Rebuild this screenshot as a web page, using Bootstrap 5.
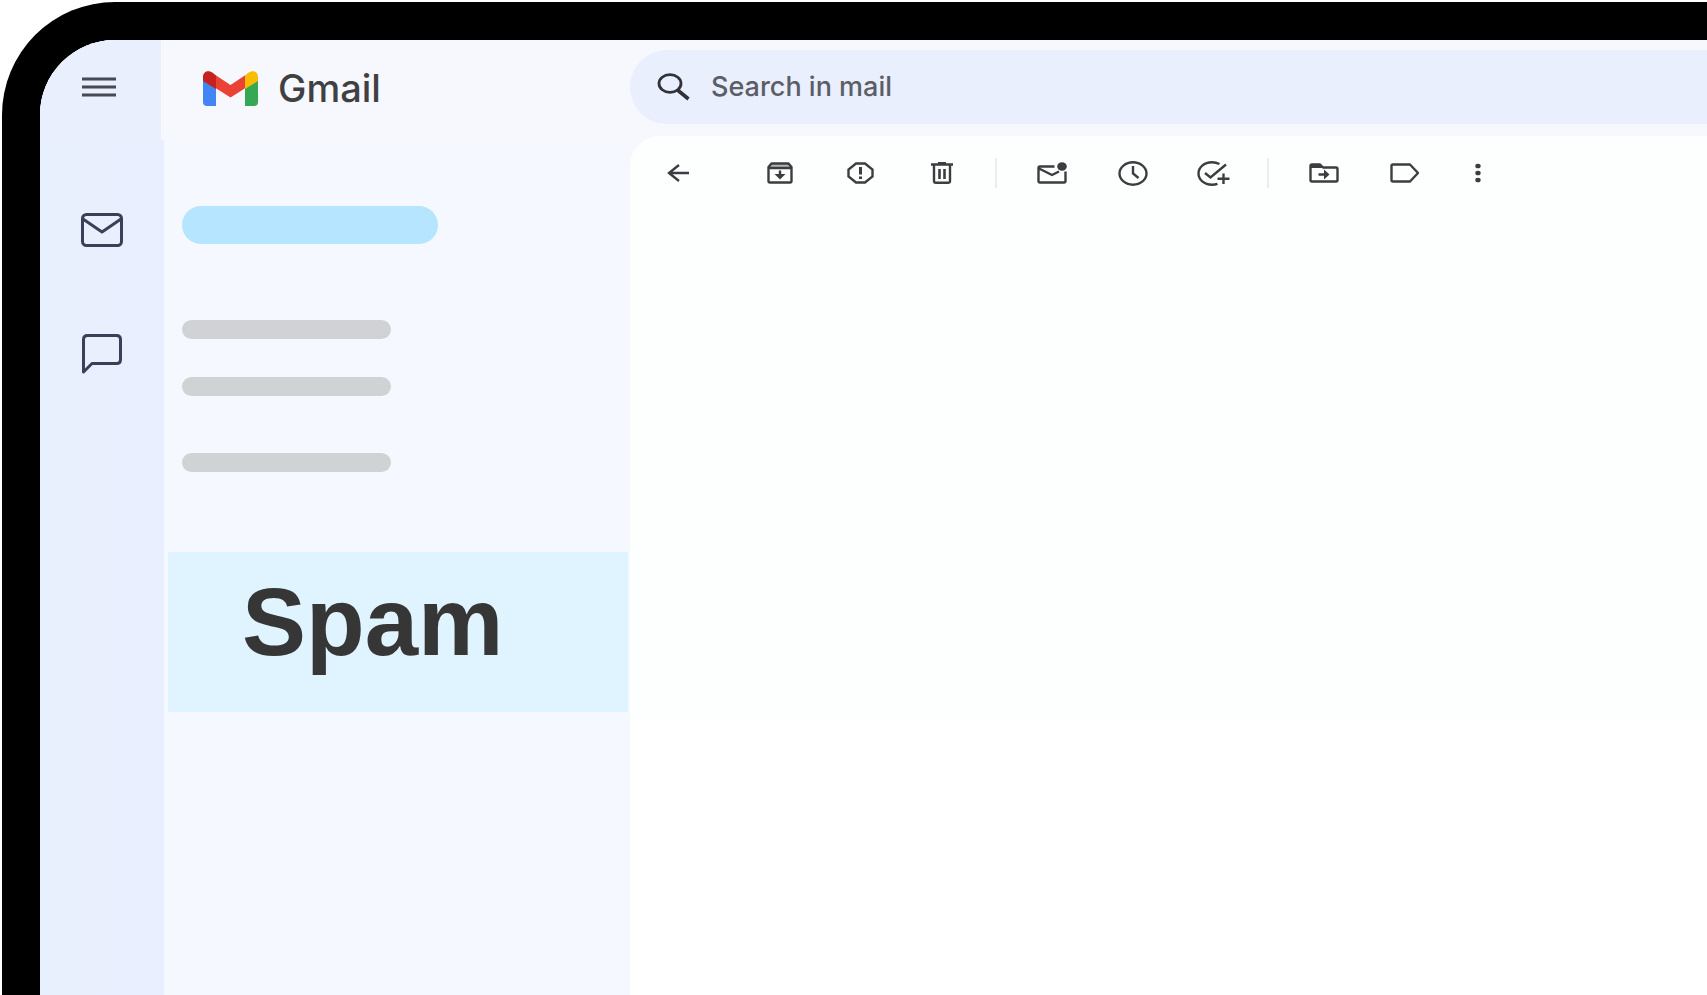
<!DOCTYPE html>
<html lang="en">
<head>
<meta charset="utf-8">
<meta name="viewport" content="width=device-width, initial-scale=1">
<title>Gmail – Spam</title>
<link href="https://cdn.jsdelivr.net/npm/bootstrap@5.3.0/dist/css/bootstrap.min.css" rel="stylesheet">
<style>
  body { font-family: Inter, "Liberation Sans", sans-serif; background: #fff; }
  .device { min-height: 100vh; padding: 2px 0 0 2px; }
  .bezel { border: solid #000; border-width: 38px 0 0 38px; border-top-left-radius: 113px; overflow: hidden; }
  .side { width: 590px; background: #f5f9ff; }
  .topbar { height: 100px; }
  .menu-cell { width: 121px; background: #e9effd; }
  .brand { background: #f7f8fd; padding-left: 42px; padding-bottom: 4px; gap: 20px; color: #3f4043; font-size: 38px; font-weight: 500; line-height: 48px; }
  .brand:hover { color: #3f4043; }
  .rail { width: 124px; background: linear-gradient(90deg, #e7f0fd, #e9effd 30%, #e9effe); padding-top: 66px; gap: 76px; color: #3d3f58; }
  .bare { border: 0; background: none; padding: 0; color: inherit; display: flex; align-items: center; justify-content: center; }
  .menu-btn { height: 48px; width: 48px; margin-bottom: 6px; margin-left: -4px; color: #474953; }
  .rail .bare { width: 48px; height: 48px; }
  .folders { padding-top: 66px; }
  .pill { width: 256px; height: 38px; background: #b6e5ff; margin: 0 18px 76px; }
  .bar { width: 209px; height: 19px; background: #d0d3d4; margin: 0 18px 38px; }
  .bar-first { background: #d1d2d5; }
  .bar-last { margin-top: 57px; margin-bottom: 80px; }
  .spam { height: 160px; margin: 0 2px 0 4px; padding: 0 0 20px 74px; background: #dff4ff; color: #363636; font: bold 96px/112px "Liberation Sans", sans-serif; }
  .spam:hover { color: #363636; }
  .content { background: #f6f8fd; padding-top: 10px; }
  .search { height: 74px; border-radius: 37px 0 0 37px; background: #e9effd; padding-left: 27px; gap: 21px; margin-bottom: 12px; color: #303238; }
  .search input { border: 0; background: none; outline: 0; padding: 0; font-size: 27px; font-weight: 500; line-height: 36px; color: #5b5e66; }
  .search input::placeholder { color: #5b5e66; opacity: 1; }
  .panel { background: linear-gradient(#fdfefe 584px, #fff 584px); border-top-left-radius: 30px; }
  .tools { height: 74px; padding-left: 7px; color: #3c3d40; }
  .tools .bare { width: 81px; height: 48px; flex-shrink: 0; }
  .tools .back { margin-right: 21px; }
  .tools .more { width: 66px; }
  .rule { width: 2px; height: 30px; background: #ebecf2; margin: 0 14px 0 13px; flex-shrink: 0; }
  svg { display: block; flex-shrink: 0; }
  .line { fill: none; stroke: currentColor; }
  .solid { fill: currentColor; stroke: none; }
</style>
</head>
<body>
<div class="device d-flex">
  <div class="bezel d-flex flex-grow-1">
    <aside class="side d-flex flex-column flex-shrink-0">
      <header class="topbar d-flex">
        <div class="menu-cell d-flex align-items-center justify-content-center">
          <button class="bare menu-btn" type="button" aria-label="Main menu">
            <svg class="line" width="34" height="20" stroke-width="3"><path d="M0 2H34M0 10H34M0 18H34"/></svg>
          </button>
        </div>
        <a href="#" class="brand d-flex flex-grow-1 align-items-center text-decoration-none">
          <svg width="55" height="35" viewBox="0 0 55 35" aria-hidden="true">
            <path fill="#4285f4" d="M0 9V31Q0 35 4 35H13V17Z"/>
            <path fill="#34a853" d="M55 9V31Q55 35 51 35H42V17Z"/>
            <path fill="#ea4335" d="M12.500 4L27.500 14L42.500 4V17L27.500 26.500L12.500 17Z"/>
            <path fill="#c5221f" d="M0 6C0 0 6-1.500 10 2L13 4.500V18L0 10Z"/>
            <path fill="#fbbc04" d="M55 6C55 0 49-1.500 45 2L42 4.500V18L55 10Z"/>
          </svg>
          <span>Gmail</span>
        </a>
      </header>
      <div class="d-flex flex-grow-1">
        <nav class="rail d-flex flex-column align-items-center" aria-label="Apps">
          <button class="bare" type="button" aria-label="Mail">
            <svg class="line" width="42" height="34" stroke-width="3" stroke-linejoin="round"><rect x="1.500" y="1.500" width="39" height="31" rx="4"/><path d="M2 6L21 19L40 6"/></svg>
          </button>
          <button class="bare" type="button" aria-label="Chat">
            <svg class="line" width="40" height="40" stroke-width="3" stroke-linejoin="round"><path d="M1.500 38V5.500Q1.500 1.500 5.500 1.500H34.500Q38.500 1.500 38.500 5.500V25.500Q38.500 29.500 34.500 29.500H10Z"/></svg>
          </button>
        </nav>
        <nav class="folders flex-grow-1" aria-label="Folders">
          <div class="pill rounded-pill"></div>
          <div class="bar bar-first rounded-pill"></div>
          <div class="bar rounded-pill"></div>
          <div class="bar bar-last rounded-pill"></div>
          <a href="#" class="spam d-flex align-items-center text-decoration-none" aria-current="page">Spam</a>
        </nav>
      </div>
    </aside>
    <main class="content d-flex flex-column flex-grow-1 overflow-hidden">
      <form class="search d-flex align-items-center" role="search">
        <svg class="line" width="33" height="28" viewBox="0 0 33 28" stroke-width="2.800" aria-hidden="true"><ellipse cx="13" cy="10.500" rx="11" ry="8.800"/><path d="M20.500 17L31.500 26" stroke-width="3.600"/></svg>
        <input class="flex-grow-1" type="text" placeholder="Search in mail" aria-label="Search in mail">
      </form>
      <section class="panel flex-grow-1">
        <div class="tools d-flex align-items-center" role="toolbar" aria-label="Message actions">
          <button class="bare back" type="button" aria-label="Back"><svg class="line" width="22" height="18" stroke-width="2.400"><path d="M22 9H2M12 1L2 9L12 17"/></svg></button>
          <button class="bare" type="button" aria-label="Archive"><svg class="line" width="26" height="22" stroke-width="2.400" stroke-linejoin="round"><path fill="#b5b6b8" stroke="none" d="M2 5L5 2H21L24 5Z"/><path d="M1.500 5L4.500 1.500H21.500L24.500 5V19Q24.500 20.500 23 20.500H3Q1.500 20.500 1.500 19ZM1.500 6H24.500"/><path d="M13 8.500V13"/><path class="solid" d="M7.500 12H18.500L13 17.500Z"/></svg></button>
          <button class="bare" type="button" aria-label="Report spam"><svg class="line" width="27" height="22" stroke-width="2.400"><path d="M9 1.500H18L25.500 7.500V14.500L18 20.500H9L1.500 14.500V7.500Z"/><path d="M13.500 5V12.500M13.500 14.500V17" stroke-width="3"/></svg></button>
          <button class="bare" type="button" aria-label="Delete"><svg class="line" width="22" height="22" stroke-width="2.400"><path d="M0 2.500H22M7 1.300H15M3 3V19Q3 20.700 5 20.700H17Q19 20.700 19 19V3"/><path d="M8.500 7V17M13.500 7V17" stroke-width="2.600"/></svg></button>
          <div class="rule"></div>
          <button class="bare" type="button" aria-label="Mark as unread"><svg class="line" width="30" height="23" stroke-width="2.400"><path d="M17.500 4.500H3Q1.500 4.500 1.500 6V19Q1.500 20.500 3 20.500H27Q28.500 20.500 28.500 19V9.500M2 6.500L15 13L22 9.500"/><ellipse class="solid" cx="25" cy="4.500" rx="4.800" ry="4.200"/></svg></button>
          <button class="bare" type="button" aria-label="Snooze"><svg class="line" width="30" height="25" stroke-width="2.400"><ellipse cx="15" cy="12.500" rx="13.500" ry="11.200"/><path d="M15 5V12.500L20.500 17"/></svg></button>
          <button class="bare" type="button" aria-label="Add to tasks"><svg class="line" width="33" height="25" stroke-width="2.400"><path d="M22.500 3Q19 1.300 15 1.300C7 1.300 1.500 6.500 1.500 12.500S7 23.700 15 23.700Q18 23.700 20.500 22.800"/><path d="M8 12L13.500 16.500L29 3.500M26.500 12.500V23M20.500 17.800H32.500"/></svg></button>
          <div class="rule"></div>
          <button class="bare" type="button" aria-label="Move to"><svg class="line" width="30" height="20" stroke-width="2.400" stroke-linejoin="round"><path d="M1.500 3Q1.500 1.500 3 1.500H11L14 4.500H27Q28.500 4.500 28.500 6V17Q28.500 18.500 27 18.500H3Q1.500 18.500 1.500 17Z"/><path class="solid" d="M1.500 1.500H11L14 5H1.500ZM15 6.500L20.500 11.500L15 16.500Z"/><path d="M9.500 11.500H16"/></svg></button>
          <button class="bare" type="button" aria-label="Labels"><svg class="line" width="30" height="20" stroke-width="2.400" stroke-linejoin="round"><path d="M3 1.500H20L28 10L20 18.500H3Q1.500 18.500 1.500 17V3Q1.500 1.500 3 1.500Z"/></svg></button>
          <button class="bare more" type="button" aria-label="More"><svg class="solid" width="6" height="20"><ellipse cx="3" cy="3" rx="2.700" ry="2.300"/><ellipse cx="3" cy="10" rx="2.700" ry="2.300"/><ellipse cx="3" cy="17" rx="2.700" ry="2.300"/></svg></button>
        </div>
      </section>
    </main>
  </div>
</div>
<script src="https://cdn.jsdelivr.net/npm/bootstrap@5.3.0/dist/js/bootstrap.bundle.min.js"></script>
</body>
</html>
